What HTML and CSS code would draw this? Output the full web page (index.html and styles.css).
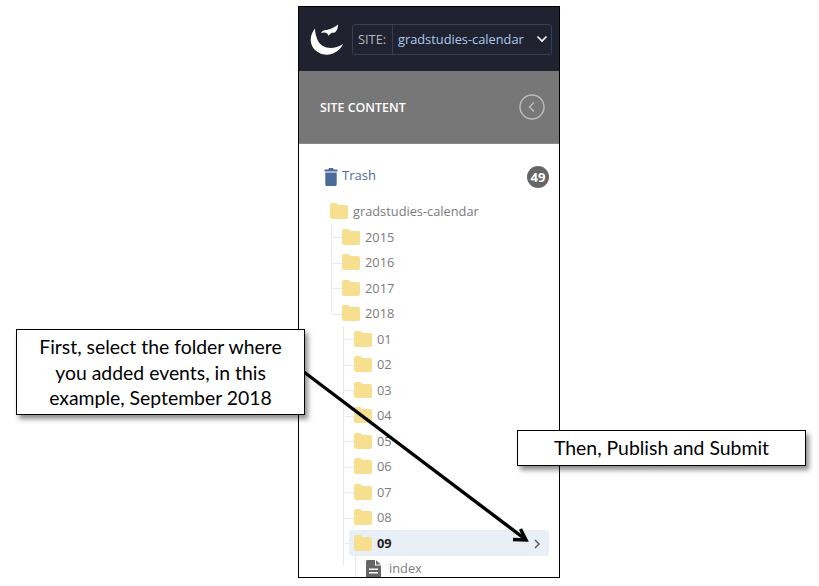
FILE: index.html
```html
<!DOCTYPE html>
<html lang="en">
<head>
<meta charset="utf-8">
<title>Site content</title>
<link rel="stylesheet" href="styles.css">
</head>
<body>
<div class="panel">
  <header class="topbar">
    <svg class="logo" viewBox="0 0 34 32" aria-hidden="true">
      <path fill="#fff" d="M5 5.500C0 11.500 -0.500 19 3 24.500C7 30.500 15 33 21.500 31C27 29.300 31 25.500 33 21C28.500 24 23.500 25.300 18.500 24.800C13 24.200 9 20.500 7.300 16.500C6 13 5 9.500 5 5.500Z"/>
      <path fill="#fff" d="M11 10C13 6.500 16.500 7.500 18.500 6.500C22 5.500 25 4 28 1.500C28 5 27 8 24.800 9.500C23.200 10.200 22 9.500 21 10.200C20 11 19.500 12 18.500 12.800C18 11 17 10 15.500 9.700C14 9.400 12.500 9.700 11 10Z"/>
    </svg>
    <div class="site-select">
      <span class="site-label">SITE:</span>
      <span class="site-name">gradstudies-calendar</span>
      <svg class="site-caret" viewBox="0 0 12 8" aria-hidden="true"><path d="M1.500 1.500L6 6L10.500 1.500" fill="none" stroke="#fff" stroke-width="1.700"/></svg>
    </div>
  </header>
  <div class="titlebar">
    <span class="title">SITE CONTENT</span>
    <span class="collapse">
      <svg viewBox="0 0 26 26" aria-hidden="true">
        <circle cx="13" cy="13" r="12" fill="none" stroke="#bdbdbd" stroke-width="1.400"/>
        <path d="M15 8.500L10.500 13L15 17.500" fill="none" stroke="#bdbdbd" stroke-width="1.400"/>
      </svg>
    </span>
  </div>
  <div class="content">
    <div class="trash">
      <svg class="trash-icon" viewBox="0 0 14 18" aria-hidden="true">
        <path fill="#4a6c9b" d="M5 0H9L9.700 1.600H13.500V3.600H0.500V1.600H4.300ZM1.300 4.600H12.700V16.500C12.700 17.400 12 18 11.200 18H2.800C2 18 1.300 17.400 1.300 16.500Z"/>
      </svg>
      <span class="trash-label">Trash</span>
      <span class="badge">49</span>
    </div>
    <div class="node root"><span class="folder"></span>gradstudies-calendar</div>
    <ul class="tree level-1">
      <li><div class="node"><span class="folder"></span>2015</div></li>
      <li><div class="node"><span class="folder"></span>2016</div></li>
      <li><div class="node"><span class="folder"></span>2017</div></li>
      <li class="last">
        <div class="node"><span class="folder"></span>2018</div>
        <ul class="tree level-2">
          <li><div class="node"><span class="folder"></span>01</div></li>
          <li><div class="node"><span class="folder"></span>02</div></li>
          <li><div class="node"><span class="folder"></span>03</div></li>
          <li><div class="node"><span class="folder"></span>04</div></li>
          <li><div class="node"><span class="folder"></span>05</div></li>
          <li><div class="node"><span class="folder"></span>06</div></li>
          <li><div class="node"><span class="folder"></span>07</div></li>
          <li><div class="node"><span class="folder"></span>08</div></li>
          <li>
            <div class="node selected">
              <span class="folder"></span><b class="selected-name">09</b>
              <svg class="chevron" viewBox="0 0 6 10" aria-hidden="true"><path d="M1 1L5 5L1 9" fill="none" stroke="#555" stroke-width="1.400"/></svg>
            </div>
            <ul class="tree level-3">
              <li>
                <div class="node page">
                  <svg class="page-icon" viewBox="0 0 15 18" aria-hidden="true">
                    <path fill="#666" fill-rule="evenodd" d="M1.500 0H9V5.500H15V16.500C15 17.400 14.400 18 13.500 18H1.500C0.600 18 0 17.400 0 16.500V1.500C0 0.600 0.600 0 1.500 0ZM10 0.200L14.800 4.500H10ZM3 8.500V10H12V8.500ZM3 12V13.500H12V12Z"/>
                  </svg>index
                </div>
              </li>
            </ul>
          </li>
        </ul>
      </li>
    </ul>
  </div>
</div>

<svg class="arrow" viewBox="0 0 819 586" aria-hidden="true">
  <path d="M304 372L525 539" fill="none" stroke="#000" stroke-width="3.400"/>
  <path d="M513 539.500L526 540L520.500 529" fill="none" stroke="#000" stroke-width="3.400"/>
</svg>

<div class="callout callout-first">First, select the folder where<br>you added events, in this<br>example, September 2018</div>
<div class="callout callout-then">Then, Publish and Submit</div>
</body>
</html>
```

FILE: styles.css
```css
* { box-sizing: border-box; }

html, body { margin: 0; padding: 0; background: #fff; }

body {
  width: 819px;
  height: 586px;
  overflow: hidden;
  position: relative;
  padding: 6px 0 0 298px;
  font-family: "Open Sans", sans-serif;
}

.panel {
  width: 262px;
  height: 572px;
  border: 1px solid #000;
  overflow: hidden;
  background: #fff;
}

.topbar {
  height: 64px;
  background: #20232f;
  display: flex;
  align-items: center;
  padding: 0 7px 0 11px;
}

.logo { width: 34px; height: 32px; flex: none; margin: -1px 8px 0 0; }

.site-select {
  flex: none;
  width: 200px;
  height: 31px;
  border: 1px solid #2f4058;
  border-radius: 3px;
  display: flex;
  align-items: center;
  font-size: 12.8px;
}

.site-label {
  width: 40px;
  height: 100%;
  line-height: 29px;
  padding-left: 5px;
  border-right: 1px solid #2f4058;
  color: #b4b8bd;
}

.site-name { padding-left: 5px; color: #a8c8f0; white-space: nowrap; }

.site-caret { width: 12px; height: 8px; margin-left: auto; margin-right: 3px; }

.titlebar {
  height: 73px;
  background: #777;
  display: flex;
  align-items: center;
  justify-content: space-between;
  padding: 0 14px 2px 21px;
  border-bottom: 1px solid #8a8a8a;
}

.title { color: #fff; font-size: 12.4px; font-weight: 600; margin-top: 2px; }

.collapse { display: flex; width: 26px; height: 26px; margin-top: 2px; }
.collapse svg { width: 26px; height: 26px; }

.content { padding: 19px 10px 0 25px; }

.trash { display: flex; align-items: center; height: 25px; color: #4a6c9b; font-size: 13px; }

.trash-icon { width: 14px; height: 18px; margin-right: 4px; margin-top: 3px; }

.trash-label { margin-top: -2px; }

.badge {
  margin-left: auto;
  width: 22px;
  height: 22px;
  border-radius: 50%;
  background: #666;
  color: #fff;
  font-size: 13px;
  font-weight: 700;
  line-height: 22px;
  text-align: center;
  margin-top: 2px;
}

.node {
  display: flex;
  align-items: center;
  height: 25.5px;
  font-size: 12.8px;
  color: #7c7c7c;
}

.root { margin: 10.5px 0 0 6px; }

.folder {
  position: relative;
  flex: none;
  width: 18px;
  height: 14px;
  margin: 2px 5px 0 0;
  background: #f6e08f;
  border-radius: 2px;
}

.folder::before {
  content: "";
  position: absolute;
  left: 0;
  top: -2px;
  width: 8px;
  height: 4px;
  background: #f6e08f;
  border-radius: 2px 2px 0 0;
}

.tree { list-style: none; margin: 0; padding: 0; }

.tree > li { position: relative; }

.tree > li::before {
  content: "";
  position: absolute;
  left: -9px;
  top: 13px;
  width: 9px;
  height: 1px;
  background: #e6e8ec;
}

.tree::before {
  content: "";
  position: absolute;
  width: 1px;
  background: #e6e8ec;
}

.level-1 { margin-left: 18px; position: relative; }
.level-1::before { left: -11px; top: 0; height: 90px; }

.level-2 { margin-left: 12px; position: relative; }
.level-2::before { left: -11px; top: 0; height: 240px; }

.level-3 { margin-left: 12px; position: relative; }
.level-3::before { left: -11px; top: 0; height: 40px; }
.level-3 > li::before { display: none; }

.selected {
  margin-left: -5px;
  padding-left: 5px;
  padding-right: 9px;
  width: 200px;
  background: #e9eff7;
  border-radius: 3px;
}

.selected-name { color: #222; font-weight: 700; }

.chevron { width: 6px; height: 10px; margin-left: auto; margin-top: 2px; }

.page { margin-left: 0; }

.page-icon { width: 15px; height: 18px; margin-right: 8px; margin-top: 1px; }

.arrow { position: absolute; left: 0; top: 0; width: 819px; height: 586px; pointer-events: none; }

.callout {
  position: absolute;
  background: #fff;
  border: 1px solid #000;
  box-shadow: 3px 4px 5px rgba(0, 0, 0, 0.45);
  color: #000;
  font-family: Lato, sans-serif;
  font-size: 19.4px;
  line-height: 25.5px;
  text-align: center;
}

.callout-first { left: 16px; top: 329px; width: 289px; height: 86px; padding-top: 4px; }

.callout-then { left: 517px; top: 430px; width: 289px; height: 36px; padding-top: 4px; }
```
